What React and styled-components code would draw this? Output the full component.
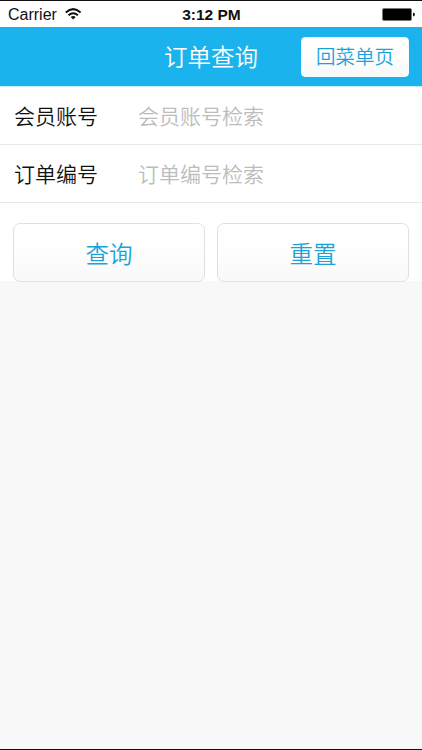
import React, { useState } from "react";
import styled, { createGlobalStyle } from "styled-components";

const GlobalStyle = createGlobalStyle`
  * {
    box-sizing: border-box;
  }

  body {
    margin: 0;
    background: #f8f8f8;
    font-family: "Liberation Sans", "Noto Sans CJK SC", sans-serif;
  }
`;

const Screen = styled.div`
  display: flex;
  flex-direction: column;
  height: 750px;
  background: #f8f8f8;
  border-top: 1px solid #111;
  border-bottom: 1px solid #111;
`;

const StatusBar = styled.div`
  display: grid;
  grid-template-columns: 1fr auto 1fr;
  align-items: center;
  height: 26px;
  padding: 2px 7px 0 8px;
  background: #fff;
  color: #111;
  font-size: 16px;
  line-height: 24px;
`;

const Carrier = styled.div`
  display: flex;
  align-items: center;
  gap: 8px;
`;

const Time = styled.div`
  font-size: 15.5px;
  font-weight: bold;
`;

const Battery = styled.svg`
  justify-self: end;
  margin-bottom: 2px;
`;

const Wifi = styled.svg`
  margin-bottom: 3px;
`;

const Header = styled.header`
  display: grid;
  grid-template-columns: 1fr auto 1fr;
  align-items: center;
  height: 60px;
  padding: 0 13px;
  background: #1bb3ed;
  border-bottom: 1px solid #c8ebf9;
`;

const Title = styled.h1`
  grid-column: 2;
  margin: 0;
  padding-bottom: 2px;
  color: #fff;
  font-family: "Noto Sans CJK SC", sans-serif;
  font-size: 23.5px;
  font-weight: 350;
  line-height: 36px;
`;

const Button = styled.button`
  padding: 0;
  background: linear-gradient(#fff 30%, #f9f9f9);
  border: 1px solid #e0e0e0;
  border-radius: 7px;
  color: #1ba3d9;
  font-family: "Noto Sans CJK SC", sans-serif;
  font-size: 23.5px;
  font-weight: 350;
  line-height: 36px;
`;

const MenuButton = styled(Button)`
  justify-self: end;
  width: 108px;
  height: 40px;
  padding-bottom: 2px;
  border-color: #f4fbfe;
  border-radius: 4px;
  font-size: 19.5px;
`;

const Form = styled.form`
  height: 194px;
  background: #fff;
`;

const Field = styled.label`
  display: flex;
  align-items: center;
  height: 58px;
  padding: 0 0 2px 14px;
  border-bottom: 1px solid #e8e8e8;
  color: #111;
  font-family: "Noto Sans CJK SC", sans-serif;
  font-size: 21px;
  font-weight: 350;
`;

const Label = styled.span`
  width: 124px;
`;

const Input = styled.input`
  flex: 1;
  min-width: 0;
  padding: 0;
  border: 0;
  outline: 0;
  background: none;
  font: inherit;

  &::placeholder {
    color: #bcbcbc;
  }
`;

const Actions = styled.div`
  display: grid;
  grid-template-columns: 1fr 1fr;
  gap: 12px;
  padding: 20px 13px 0;

  ${Button} {
    height: 59px;
  }
`;

export default function App() {
  const [account, setAccount] = useState("");
  const [orderNo, setOrderNo] = useState("");

  const reset = () => {
    setAccount("");
    setOrderNo("");
  };

  return (
    <>
      <GlobalStyle />
      <Screen>
        <StatusBar>
          <Carrier>
            Carrier
            <Wifi width="17" height="12" viewBox="0 0 17 12">
              <g fill="none" stroke="#111" strokeWidth="2">
                <path d="M0.8 4.4Q8.2 -2.2 15.6 4.4" />
                <path d="M3.5 7.2Q8.2 3.2 12.9 7.2" />
              </g>
              <path d="M5.7 9Q8.2 7 10.7 9L8.2 11.6Z" fill="#111" />
            </Wifi>
          </Carrier>
          <Time>3:12 PM</Time>
          <Battery width="33" height="13" viewBox="0 0 33 13">
            <rect x="0.5" y="0.5" width="29" height="12" rx="1.5" fill="#000" stroke="#777" />
            <path d="M31 4.5Q33 4.8 33 6.5Q33 8.2 31 8.5Z" fill="#111" />
          </Battery>
        </StatusBar>
        <Header>
          <Title>订单查询</Title>
          <MenuButton type="button">回菜单页</MenuButton>
        </Header>
        <Form onSubmit={e => e.preventDefault()}>
          <Field>
            <Label>会员账号</Label>
            <Input
              type="text"
              placeholder="会员账号检索"
              value={account}
              onChange={e => setAccount(e.target.value)}
            />
          </Field>
          <Field>
            <Label>订单编号</Label>
            <Input
              type="text"
              placeholder="订单编号检索"
              value={orderNo}
              onChange={e => setOrderNo(e.target.value)}
            />
          </Field>
          <Actions>
            <Button type="submit">查询</Button>
            <Button type="button" onClick={reset}>
              重置
            </Button>
          </Actions>
        </Form>
      </Screen>
    </>
  );
}
